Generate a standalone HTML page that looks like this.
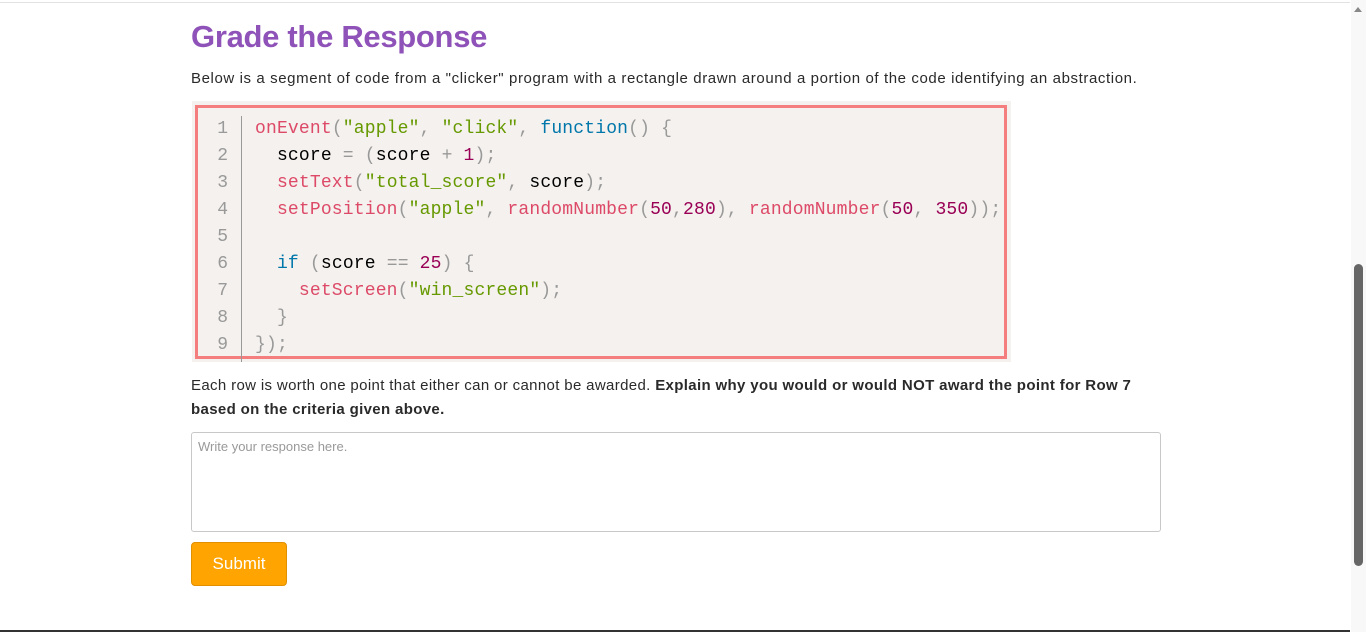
<!DOCTYPE html>
<html><head><style>
body{margin:0;width:1366px;height:632px;overflow:hidden;background:#fff;font-family:"Liberation Sans",sans-serif;position:relative;color:#2a2a2a}
.top{position:absolute;left:0;top:2px;width:1350px;height:1px;background:#e2e2e2}
.bot{position:absolute;left:0;top:630px;width:1350px;height:2px;background:#333}
.sb{position:absolute;left:1351px;top:0;width:15px;height:632px;background:#f8f8f8}
.thumb{position:absolute;left:1354px;top:264px;width:9px;height:302px;background:#666;border-radius:5px}
.arr{position:absolute;left:1354px;top:7px;width:0;height:0;border-left:4px solid transparent;border-right:4px solid transparent;border-bottom:5px solid #888}
h1{position:absolute;left:191px;top:19px;margin:0;font-size:31px;font-weight:bold;color:#8e52b8;letter-spacing:-0.3px}
.p1{position:absolute;left:191px;top:70px;font-size:15px;letter-spacing:0.6px;white-space:nowrap}
.code{position:absolute;left:192px;top:101px;width:819px;height:261px;background:#f5f1ee}
.red{position:absolute;left:195px;top:105px;width:806px;height:248px;border:3px solid #f47d7d}
.gut{position:absolute;left:241px;top:116px;width:1px;height:246px;background:#999}
pre{margin:0;font-family:"Liberation Mono",monospace;font-size:18px;line-height:27px;position:absolute;top:116px}
.ln{left:200px;width:28px;text-align:right;color:#999}
.src{left:255px;color:#000;letter-spacing:0.17px}
.f{color:#dd4a68}.s{color:#669900}.k{color:#0077aa}.n{color:#990055}.p{color:#999}
.p2{position:absolute;left:191px;top:374px;font-size:15px;line-height:24px;width:960px;letter-spacing:0.35px}
.ta{position:absolute;left:191px;top:432px;width:968px;height:98px;border:1px solid #c8c8c8;border-radius:3px}
.ta span{position:absolute;left:6px;top:6px;font-size:13px;color:#999}
.btn{position:absolute;left:191px;top:542px;width:94px;height:42px;background:#ffa400;border:1px solid #e09000;border-radius:4px;color:#fff;font-size:17px;text-align:center;line-height:42px}
</style></head><body>
<div class="top"></div>
<h1>Grade the Response</h1>
<div class="p1">Below is a segment of code from a "clicker" program with a rectangle drawn around a portion of the code identifying an abstraction.</div>
<div class="code"></div>
<div class="red"></div>
<div class="gut"></div>
<pre class="ln">1
2
3
4
5
6
7
8
9</pre>
<pre class="src"><span class="f">onEvent</span><span class="p">(</span><span class="s">"apple"</span><span class="p">,</span> <span class="s">"click"</span><span class="p">,</span> <span class="k">function</span><span class="p">()</span> <span class="p">{</span>
  score <span class="p">=</span> <span class="p">(</span>score <span class="p">+</span> <span class="n">1</span><span class="p">);</span>
  <span class="f">setText</span><span class="p">(</span><span class="s">"total_score"</span><span class="p">,</span> score<span class="p">);</span>
  <span class="f">setPosition</span><span class="p">(</span><span class="s">"apple"</span><span class="p">,</span> <span class="f">randomNumber</span><span class="p">(</span><span class="n">50</span><span class="p">,</span><span class="n">280</span><span class="p">),</span> <span class="f">randomNumber</span><span class="p">(</span><span class="n">50</span><span class="p">,</span> <span class="n">350</span><span class="p">));</span>

  <span class="k">if</span> <span class="p">(</span>score <span class="p">==</span> <span class="n">25</span><span class="p">)</span> <span class="p">{</span>
    <span class="f">setScreen</span><span class="p">(</span><span class="s">"win_screen"</span><span class="p">);</span>
  <span class="p">}</span>
<span class="p">});</span></pre>
<div class="p2">Each row is worth one point that either can or cannot be awarded. <b>Explain why you would or would NOT award the point for Row 7<br>based on the criteria given above.</b></div>
<div class="ta"><span>Write your response here.</span></div>
<div class="btn">Submit</div>
<div class="sb"></div><div class="arr"></div><div class="thumb"></div>
<div class="bot"></div>
</body></html>
